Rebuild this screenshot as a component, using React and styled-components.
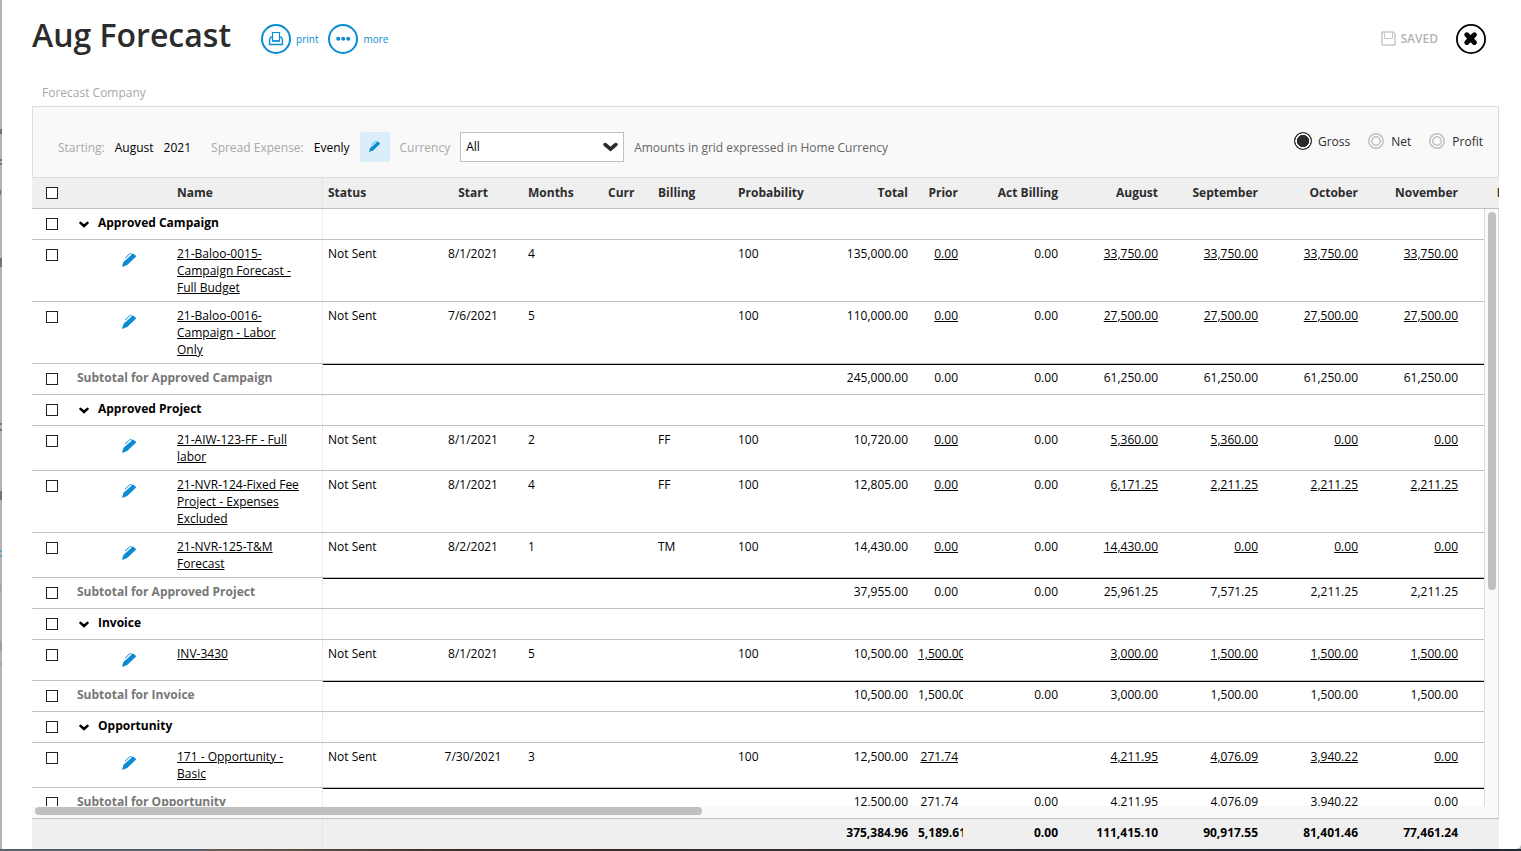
import React, { useState } from "react";
import styled, { createGlobalStyle, css } from "styled-components";

const Global = createGlobalStyle`
  * { box-sizing: border-box; }
  html, body { margin: 0; }
  body {
    font: 12px/17px "Open Sans", "Liberation Sans", sans-serif;
    color: #000;
    background: #b4b4b4;
    overflow: hidden;
  }
  button, select { font: inherit; }
`;

const BLUE = "#0a8bd3";

const Window = styled.div`
  position: relative;
  height: 100vh;
  padding: 0 0 2px 2px;
  background: linear-gradient(to right, #56616d 0 13%, #6b5d52 14%, #3a2f2b 30%, #2c2b30 60%, #20262e) bottom / 100% 2px no-repeat, #b4b4b4;
`;
const Behind = styled.svg`
  position: absolute;
  left: 0;
  top: 0;
`;
const Panel = styled.main`
  display: flex;
  flex-direction: column;
  height: 100%;
  padding: 0 22px 0 30px;
  background: #fff;
  border-bottom-right-radius: 5px;
`;

const Header = styled.header`
  display: flex;
  align-items: center;
  height: 78px;
  padding-right: 13px;
`;
const Title = styled.h1`
  margin: 0 30px 8px 0;
  font-size: 32px;
  line-height: 46px;
  font-weight: 600;
  color: #2c2c2c;
`;
const Action = styled.button`
  display: flex;
  align-items: center;
  gap: 5px;
  margin: 0 10px 0 0;
  padding: 0;
  border: 0;
  background: none;
  color: ${BLUE};
  font-size: 10px;
  cursor: pointer;
`;
const Saved = styled.div`
  display: flex;
  align-items: center;
  gap: 5px;
  margin: 0 0 2px auto;
  color: #b4b4b4;
  font-weight: 600;
`;
const Close = styled.button`
  display: block;
  margin-left: 18px;
  padding: 0;
  border: 0;
  background: none;
  cursor: pointer;
  svg { display: block; }
`;

const Company = styled.div`
  padding: 6px 10px 5px;
  color: #a8a8a8;
`;

const Toolbar = styled.section`
  display: flex;
  align-items: center;
  flex: none;
  height: 72px;
  padding: 9px 15px 0 25px;
  border: 1px solid #dcdcdc;
  background: #f9f9f9;
`;
const Label = styled.label`
  padding-top: 2px;
  color: #a8a8a8;
  margin-right: 10px;
`;
const Value = styled.span`
  padding-top: 2px;
  margin-right: ${(p) => p.$gap}px;
  color: ${(p) => (p.$muted ? "#666" : "#000")};
`;
const EditButton = styled.button`
  display: flex;
  align-items: center;
  justify-content: center;
  width: 30px;
  height: 30px;
  margin-right: 10px;
  padding: 0;
  border: 0;
  border-radius: 2px;
  background: #daeefa;
`;
const SelectBox = styled.div`
  position: relative;
  margin-right: 10px;
  select {
    display: block;
    width: 164px;
    height: 30px;
    padding: 0 5px 1px;
    border: 1px solid #c0c0c0;
    border-radius: 0;
    appearance: none;
    background: #fff;
    color: #000;
  }
  svg {
    position: absolute;
    right: 6px;
    top: 10px;
    pointer-events: none;
  }
`;
const Modes = styled.div`
  display: flex;
  align-items: center;
  gap: 17px;
  margin: 0 0 12px auto;
`;
const Mode = styled.label`
  display: flex;
  align-items: center;
  gap: 6px;
  color: #2c2c2c;
  span { padding-top: 2px; }
`;
const Radio = styled.input`
  appearance: none;
  width: 16px;
  height: 16px;
  margin: 1px;
  border-radius: 50%;
  background: radial-gradient(circle closest-side, transparent 42%, #c6c6c6 46% 61%, #fff 65% 76%, #c6c6c6 80%);
  &:checked {
    width: 18px;
    height: 18px;
    margin: 0;
    background: radial-gradient(circle closest-side, #2c2c2c 66%, #fff 70% 82%, #2c2c2c 88%);
  }
`;

const GridFrame = styled.div`
  position: relative;
  flex: 1;
  min-height: 0;
`;
const Table = styled.table`
  display: flex;
  flex-direction: column;
  height: 100%;
`;
const Head = styled.thead`
  display: block;
  flex: none;
  overflow: hidden;
  background: #efefef;
  border-bottom: 1px solid #c0c0c0;
  color: #2c2c2c;
`;
const Body = styled.tbody`
  display: block;
  flex: 1;
  min-height: 0;
  overflow: hidden;
  margin-right: 14px;
  border-right: 1px solid #dcdcdc;
`;
const Foot = styled.tfoot`
  display: block;
  flex: none;
  overflow: hidden;
  margin-top: 12px;
  border-top: 1px solid #c0c0c0;
  background: #efefef;
`;
const Row = styled.tr`
  display: grid;
  grid-template-columns: 40px 100px 151px 100px 100px 80px 50px 80px 100px 80px 50px repeat(6, 100px);
  width: max-content;
  min-height: ${(p) => p.$min || 31}px;
  border-bottom: ${(p) => (p.$plain ? 0 : 1)}px solid #c0c0c0;
  font-weight: ${(p) => (p.$bold ? 700 : 400)};
`;
const cell = css`
  padding: 5px;
  overflow: hidden;
  text-align: ${(p) => p.$align || "left"};
  font-weight: inherit;
  white-space: nowrap;
  border-top: ${(p) => (p.$sum ? "1px solid #000" : 0)};
  ${(p) => p.$sum && "padding-top: 4px;"}
`;
const Cell = styled.td`${cell}`;
const HeadCell = styled.th`
  ${cell}
  padding-top: 6px;
`;
const nameCell = css`
  padding: 5px 20px 5px 5px;
  border-right: 1px dotted #dcdcdc;
  text-align: left;
  white-space: normal;
`;
const NameCell = styled.td`${nameCell}`;
const NameHead = styled.th`
  ${nameCell}
  padding-top: 6px;
  font-weight: inherit;
`;
const CheckCell = styled.td`
  padding: 9px 0 0 14px;
`;
const Check = styled.input`
  display: block;
  appearance: none;
  width: 12px;
  height: 12px;
  margin: 0;
  border: 1px solid #222;
  background: #fff;
`;
const PencilCell = styled.td`
  padding: 13px 0 0 50px;
`;
const IconButton = styled.button`
  display: block;
  padding: 0;
  border: 0;
  background: none;
  svg { display: block; }
`;
const GroupCell = styled.td`
  grid-column: span 2;
  display: flex;
  align-items: flex-start;
  gap: 9px;
  padding: 5px 0 5px 7px;
  border-right: 1px dotted #dcdcdc;
  font-weight: 700;
  svg { margin-top: 7px; }
`;
const SubtotalCell = styled.td`
  grid-column: span 2;
  padding: 5px;
  border-right: 1px dotted #dcdcdc;
  color: #777;
  font-weight: 700;
`;
const Link = styled.a`
  color: #000;
  text-decoration: underline;
  text-underline-offset: 1px;
`;
const Track = styled.div`
  position: absolute;
  background: #f9f9f9;
  ${(p) => p.$vertical
    ? "top: 31px; bottom: 31px; right: 0; width: 14px; padding: 3px 2px 15px 3px; border-right: 1px solid #dcdcdc;"
    : "left: 0; right: 1px; bottom: 31px; height: 12px; padding: 1px 12px 3px 3px;"}
`;
const Thumb = styled.div`
  border-radius: 4px;
  background: #c0c0c0;
  ${(p) => (p.$vertical ? "width: 8px; height: 64%;" : "height: 8px; width: 46%;")}
`;

const Pencil = ({ size = 14 }) => (
  <svg width={size} height={size} viewBox="0 0 14 14" aria-hidden="true">
    <path d="M10.2.8Q11 .2 11.8.9L13.6 2.4Q14.4 3.2 13.6 4L5.2 12.1 0 14 1.4 8.9z" fill={BLUE} />
    <path d="M3 5.2 7.4 1Q8.2.3 9.4.6" fill="none" stroke={BLUE} strokeWidth="1" />
    <path d="M3.9 6.2 9 1.5" stroke="#fff" strokeWidth="1" />
  </svg>
);
const Chevron = ({ w = 10, h = 7, color = "#000" }) => (
  <svg width={w} height={h} viewBox="0 0 10 7" preserveAspectRatio="none" aria-hidden="true">
    <path d="M1.5 1.8 5 5 8.5 1.8" fill="none" stroke={color} strokeWidth="2.5" strokeLinecap="round" />
  </svg>
);

const months = ["August", "September", "October", "November", "December"];
const columns = [
  ["Status"], ["Start", "center"], ["Months"], ["Curr"], ["Billing"], ["Probability"],
  ["Total", "right"], ["Prior", "right"], ["Act Billing", "right"],
  ...months.map((m) => [m, "right"]),
];

const item = (name, start, n, billing, total, prior, act, ...m) => ({
  name, cells: ["Not Sent", start, n, "", billing, "100", total, prior, act, ...m],
});
const groups = [
  {
    title: "Approved Campaign",
    items: [
      item("21-Baloo-0015-Campaign Forecast - Full Budget", "8/1/2021", "4", "", "135,000.00", "0.00", "0.00", "33,750.00", "33,750.00", "33,750.00", "33,750.00"),
      item("21-Baloo-0016-Campaign - Labor Only", "7/6/2021", "5", "", "110,000.00", "0.00", "0.00", "27,500.00", "27,500.00", "27,500.00", "27,500.00"),
    ],
    sums: ["245,000.00", "0.00", "0.00", "61,250.00", "61,250.00", "61,250.00", "61,250.00"],
  },
  {
    title: "Approved Project",
    items: [
      item("21-AIW-123-FF - Full labor", "8/1/2021", "2", "FF", "10,720.00", "0.00", "0.00", "5,360.00", "5,360.00", "0.00", "0.00"),
      item("21-NVR-124-Fixed Fee Project - Expenses Excluded", "8/1/2021", "4", "FF", "12,805.00", "0.00", "0.00", "6,171.25", "2,211.25", "2,211.25", "2,211.25"),
      item("21-NVR-125-T&M Forecast", "8/2/2021", "1", "TM", "14,430.00", "0.00", "0.00", "14,430.00", "0.00", "0.00", "0.00"),
    ],
    sums: ["37,955.00", "0.00", "0.00", "25,961.25", "7,571.25", "2,211.25", "2,211.25"],
  },
  {
    title: "Invoice",
    items: [item("INV-3430", "8/1/2021", "5", "", "10,500.00", "1,500.00", "", "3,000.00", "1,500.00", "1,500.00", "1,500.00")],
    sums: ["10,500.00", "1,500.00", "0.00", "3,000.00", "1,500.00", "1,500.00", "1,500.00"],
  },
  {
    title: "Opportunity",
    items: [item("171 - Opportunity - Basic", "7/30/2021", "3", "", "12,500.00", "271.74", "", "4,211.95", "4,076.09", "3,940.22", "0.00")],
    sums: ["12,500.00", "271.74", "0.00", "4,211.95", "4,076.09", "3,940.22", "0.00"],
  },
];
const totals = ["375,384.96", "5,189.61", "0.00", "111,415.10", "90,917.55", "81,401.46", "77,461.24"];
const blanks = ["", "", "", "", "", ""];

function Cells({ values, linked, sum }) {
  return columns.map(([label, align], i) => {
    const v = values[i] || "";
    const isLink = linked && v && (i === 7 || i > 8);
    return (
      <Cell key={label} $align={align} $sum={sum}>
        {isLink ? <Link href="#">{v}</Link> : v}
      </Cell>
    );
  });
}
const CheckBox = ({ label }) => (
  <CheckCell><Check type="checkbox" aria-label={label} /></CheckCell>
);

function Group({ group }) {
  return (
    <>
      <Row>
        <CheckBox label={`Select ${group.title}`} />
        <GroupCell><Chevron />{group.title}</GroupCell>
        <Cells values={[]} />
      </Row>
      {group.items.map((it) => (
        <Row key={it.name} $min={41}>
          <CheckBox label={`Select ${it.name}`} />
          <PencilCell><IconButton aria-label={`Edit ${it.name}`}><Pencil /></IconButton></PencilCell>
          <NameCell><Link href="#">{it.name}</Link></NameCell>
          <Cells values={it.cells} linked />
        </Row>
      ))}
      <Row>
        <CheckBox label={`Select subtotal for ${group.title}`} />
        <SubtotalCell>Subtotal for {group.title}</SubtotalCell>
        <Cells values={[...blanks, ...group.sums]} sum />
      </Row>
    </>
  );
}

export default function App() {
  const [mode, setMode] = useState("Gross");
  return (
    <Window>
      <Global />
      <Behind width="2" height="849" aria-hidden="true">
        <path d="M1 120v5M0 149h2M0 152h2M0 172v5M1 230v7M0 368h2M0 374h2M1 427v7" transform="translate(0 0)" stroke="none" />
        <path d="M1 129v5M0 160h2M0 164h2M0 190v5M1 258v9M0 424h2M0 430h2M1 491v9" stroke="#333" />
        <path d="M0 551h2M0 556h2" stroke={BLUE} />
        <path d="M0 583v8M1 641v10M0 664h2" stroke="#888" />
      </Behind>
      <Panel>
        <Header>
          <Title>Aug Forecast</Title>
          <Action>
            <svg width="30" height="30" viewBox="0 0 30 30" fill="none" stroke={BLUE} aria-hidden="true">
              <circle cx="15" cy="15" r="14" strokeWidth="2" />
              <path d="M11.5 17V8.5h7V17z" strokeWidth="1.2" />
              <path d="M11.5 13.2H9.8l-1.3 2.3v5h13v-5l-1.3-2.3h-1.7M11.5 17h7" strokeWidth="1.4" strokeLinejoin="round" />
            </svg>
            print
          </Action>
          <Action>
            <svg width="30" height="30" viewBox="0 0 30 30" aria-hidden="true">
              <circle cx="15" cy="15" r="14" fill="none" stroke={BLUE} strokeWidth="2" />
              <path d="M10.2 14.8h.01M15.2 14.8h.01M20.2 14.8h.01" stroke={BLUE} strokeWidth="4" strokeLinecap="round" />
            </svg>
            more
          </Action>
          <Saved>
            <svg width="15" height="15" viewBox="0 0 15 15" fill="none" stroke="#c8c8c8" aria-hidden="true">
              <path d="M1.5 1H12l2 2v10.5q0 .5-.5.5h-12Q1 14 1 13.500V1.500Q1 1 1.500 1z" strokeWidth="1.5" />
              <path d="M3.500 1v6.500h8V1" />
            </svg>
            SAVED
          </Saved>
          <Close aria-label="Close">
            <svg width="30" height="30" viewBox="0 0 30 30" fill="none" stroke="#000">
              <circle cx="15" cy="15" r="14.1" strokeWidth="1.8" />
              <path d="M10.8 10.8l7.6 7.6M18.4 10.8l-7.6 7.6" strokeWidth="5" strokeLinecap="round" />
            </svg>
          </Close>
        </Header>
        <Company>Forecast Company</Company>
        <Toolbar>
          <Label as="span">Starting:</Label>
          <Value $gap={10}>August</Value>
          <Value $gap={20}>2021</Value>
          <Label as="span">Spread Expense:</Label>
          <Value $gap={10}>Evenly</Value>
          <EditButton aria-label="Edit spread"><Pencil size={11} /></EditButton>
          <Label htmlFor="currency">Currency</Label>
          <SelectBox>
            <select id="currency"><option>All</option></select>
            <Chevron w={15} h={10} color="#2c2c2c" />
          </SelectBox>
          <Value $muted $gap={0}>Amounts in grid expressed in Home Currency</Value>
          <Modes>
            {["Gross", "Net", "Profit"].map((m) => (
              <Mode key={m}>
                <Radio type="radio" name="mode" checked={mode === m} onChange={() => setMode(m)} />
                <span>{m}</span>
              </Mode>
            ))}
          </Modes>
        </Toolbar>
        <GridFrame>
          <Table>
            <Head>
              <Row $plain $bold $min={30}>
                <CheckBox label="Select all" />
                <td />
                <NameHead>Name</NameHead>
                {columns.map(([label, align]) => (
                  <HeadCell key={label} $align={align}>{label}</HeadCell>
                ))}
              </Row>
            </Head>
            <Body>
              {groups.map((g) => <Group key={g.title} group={g} />)}
            </Body>
            <Foot>
              <Row $plain $bold $min={30}>
                <td /><td /><NameCell />
                <Cells values={[...blanks, ...totals]} />
              </Row>
            </Foot>
          </Table>
          <Track $vertical><Thumb $vertical /></Track>
          <Track><Thumb /></Track>
        </GridFrame>
      </Panel>
    </Window>
  );
}
